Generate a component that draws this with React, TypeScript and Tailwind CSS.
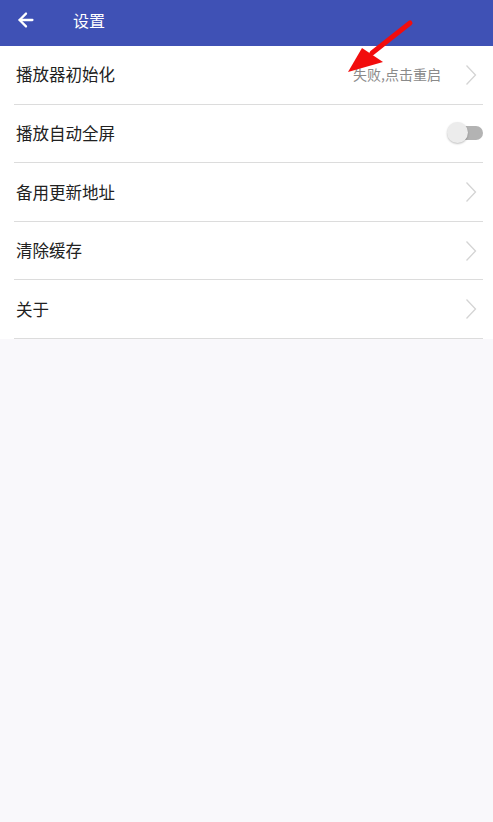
import { ArrowLeft } from "lucide-react";

const rows = [
  { title: "播放器初始化", note: "失败,点击重启", kind: "link" },
  { title: "播放自动全屏", kind: "switch" },
  { title: "备用更新地址", kind: "link" },
  { title: "清除缓存", kind: "link" },
  { title: "关于", kind: "link" },
];

const Chevron = () => (
  <svg width="12" height="22" viewBox="0 0 12 22" fill="none">
    <path d="M1.5 1.5 L10.5 11 L1.5 20.5" stroke="#d4d4d4" strokeWidth="1.3" />
  </svg>
);

const Toggle = () => (
  <div className="relative w-[36px] h-[22px] flex items-center">
    <div className="ml-[8px] w-[28px] h-[14px] rounded-full bg-[#b3b3b3]" />
    <div className="absolute left-0 top-0 w-[21px] h-[21px] rounded-full bg-[#ececec] shadow-[0_1px_2px_rgba(0,0,0,0.25)]" />
  </div>
);

const App = () => {
  return (
    <div
      className="min-h-[822px] bg-[#f9f8fb] relative"
      style={{ fontFamily: '"Noto Sans CJK SC", "Noto Sans", sans-serif' }}
    >
      <div className="h-[46px] pb-[7px] bg-[#3f51b5] flex items-center text-white">
        <div className="w-[52px] flex justify-center">
          <ArrowLeft size={22} strokeWidth={2.5} />
        </div>
        <span className="ml-[21px] text-[16px]">设置</span>
      </div>

      <div className="bg-white">
        {rows.map((row, index) => (
          <div key={index} className="ml-[14px] mr-[10px] h-[58.6px] flex items-center border-b border-[#dcdcdc]">
            <span className="pl-[2px] text-[16.5px] text-[#212121]">{row.title}</span>
            <div className="ml-auto flex items-center">
              {row.note && <span className="text-[14px] text-[#8a8a8a] mr-[24px]">{row.note}</span>}
              {row.kind === "link" ? (
                <div className="mr-[6px]">
                  <Chevron />
                </div>
              ) : (
                <Toggle />
              )}
            </div>
          </div>
        ))}
      </div>

      {/* red annotation arrow */}
      <svg className="absolute left-[340px] top-[15px]" width="80" height="65" viewBox="0 0 80 65">
        <path d="M70 8 L32 38" stroke="#f20d0d" strokeWidth="5" strokeLinecap="round" />
        <path d="M8 57 L22 33 L43 47 Z" fill="#f20d0d" />
      </svg>
    </div>
  );
};

export default App;
